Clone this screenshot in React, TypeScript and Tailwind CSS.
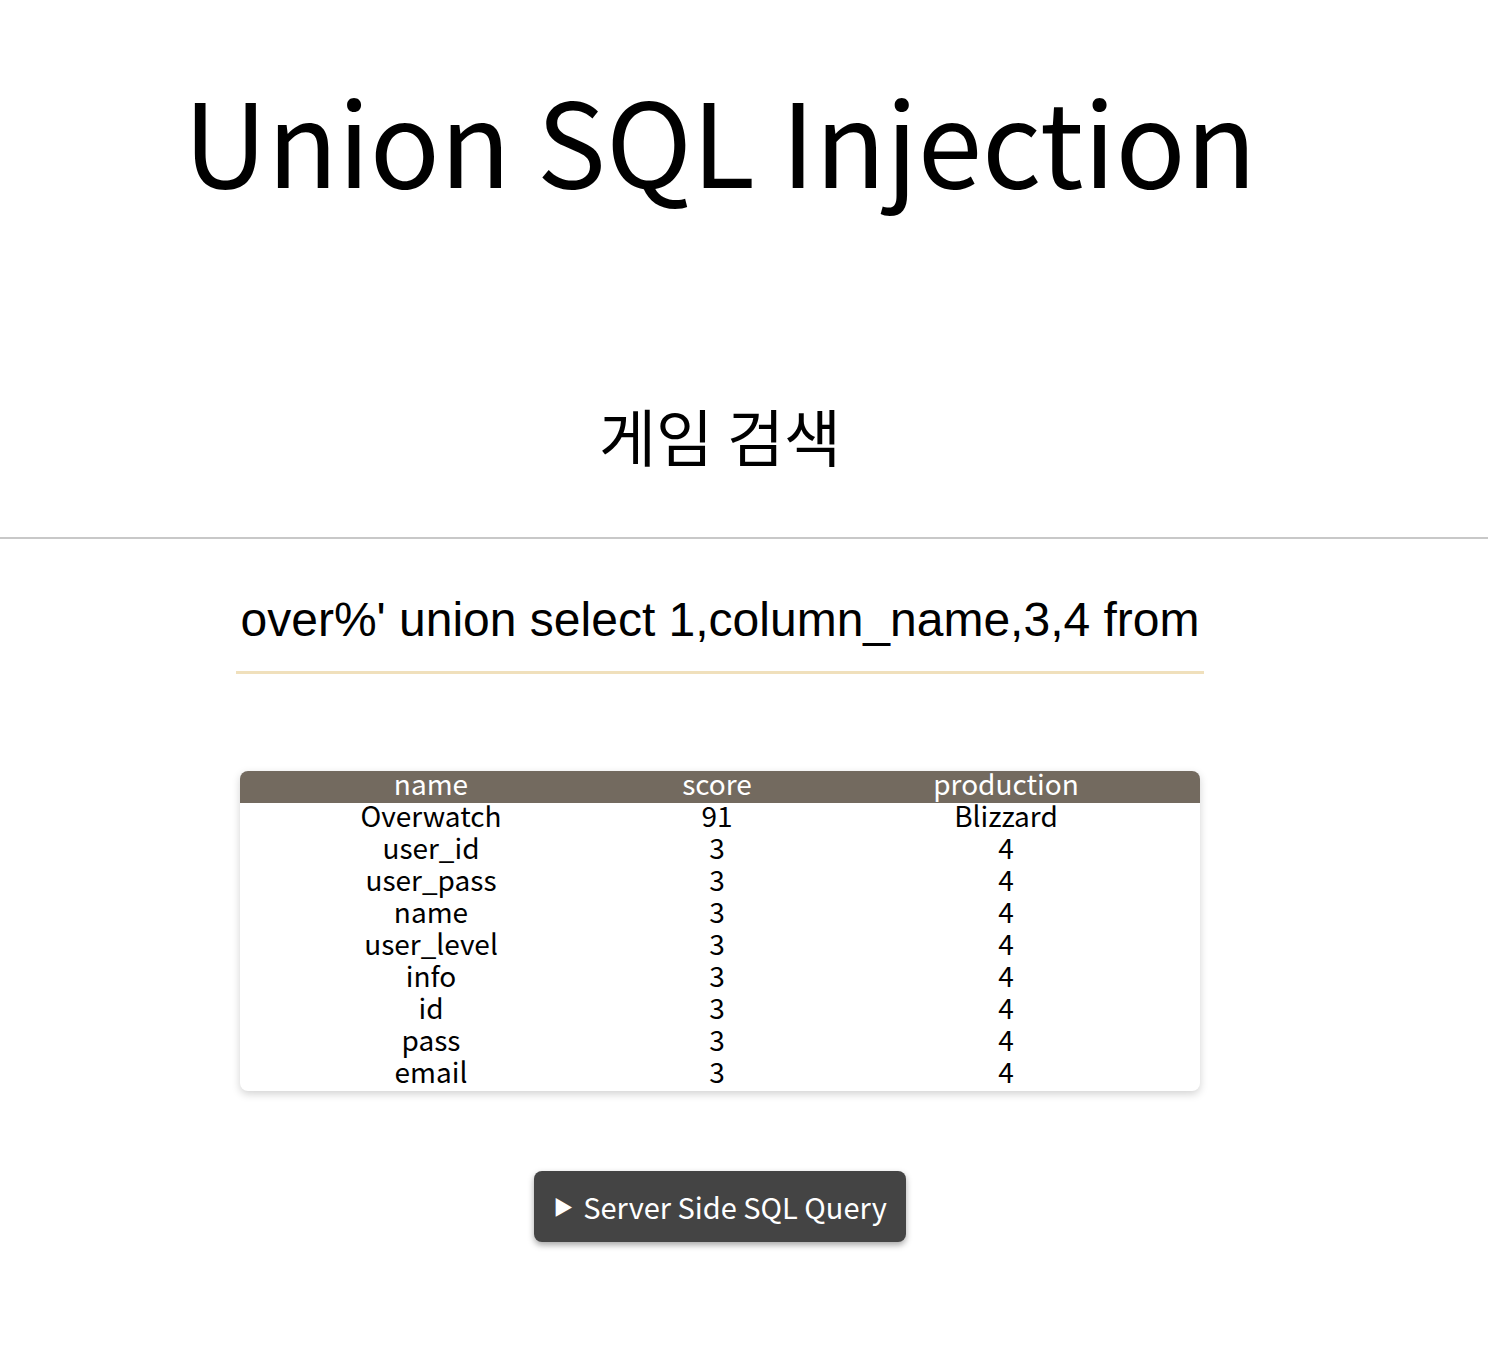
import React from "react";

const ROWS: [string, string, string][] = [
  ["Overwatch", "91", "Blizzard"],
  ["user_id", "3", "4"],
  ["user_pass", "3", "4"],
  ["name", "3", "4"],
  ["user_level", "3", "4"],
  ["info", "3", "4"],
  ["id", "3", "4"],
  ["pass", "3", "4"],
  ["email", "3", "4"],
];

const KR = "font-['Noto_Sans_CJK_KR','Noto_Sans',sans-serif]";

export default function App() {
  return (
    <div className={`min-h-[1354px] bg-white text-black ${KR}`}>
      <div className="w-[1440px]">
        <h1 className="pt-[57px] text-center text-[116px] leading-[160px] font-normal">
          Union SQL Injection
        </h1>
        <h2 className="mt-[178px] text-center text-[62px] leading-[80px] font-normal">
          게임 검색
        </h2>
      </div>

      <hr className="mt-[62px] border-0 border-t-2 border-[#c8c8c8]" />

      <div className="w-[1440px] flex flex-col items-center">
        <input
          readOnly
          value="over%' union select 1,column_name,3,4 from"
          className="mt-[28px] w-[968px] h-[107px] text-center text-[48px] font-['Liberation_Sans',Arial,sans-serif] border-0 border-b-[3px] border-[#f0e0bc] outline-none bg-transparent"
        />

        <div className="mt-[97px] w-[960px] rounded-lg bg-white shadow-[0_3px_8px_rgba(0,0,0,0.18)] overflow-hidden text-[28px] leading-[24px]">
          <div className="grid grid-cols-[382px_190px_388px] h-[32px] pb-[8px] bg-[#736a5f] text-white">
            <div className="text-center">name</div>
            <div className="text-center">score</div>
            <div className="text-center">production</div>
          </div>
          {ROWS.map((r) => (
            <div key={r[0]} className="grid grid-cols-[382px_190px_388px] h-[32px] pb-[8px]">
              <div className="text-center">{r[0]}</div>
              <div className="text-center">{r[1]}</div>
              <div className="text-center">{r[2]}</div>
            </div>
          ))}
        </div>

        <button className="mt-[80px] w-[372px] h-[71px] rounded-lg bg-[#444444] text-white text-[29px] shadow-[0_3px_6px_rgba(0,0,0,0.35)] flex items-center justify-center gap-[10px]">
          <span className="text-[20px]">▶</span>
          <span>Server Side SQL Query</span>
        </button>
      </div>
    </div>
  );
}
